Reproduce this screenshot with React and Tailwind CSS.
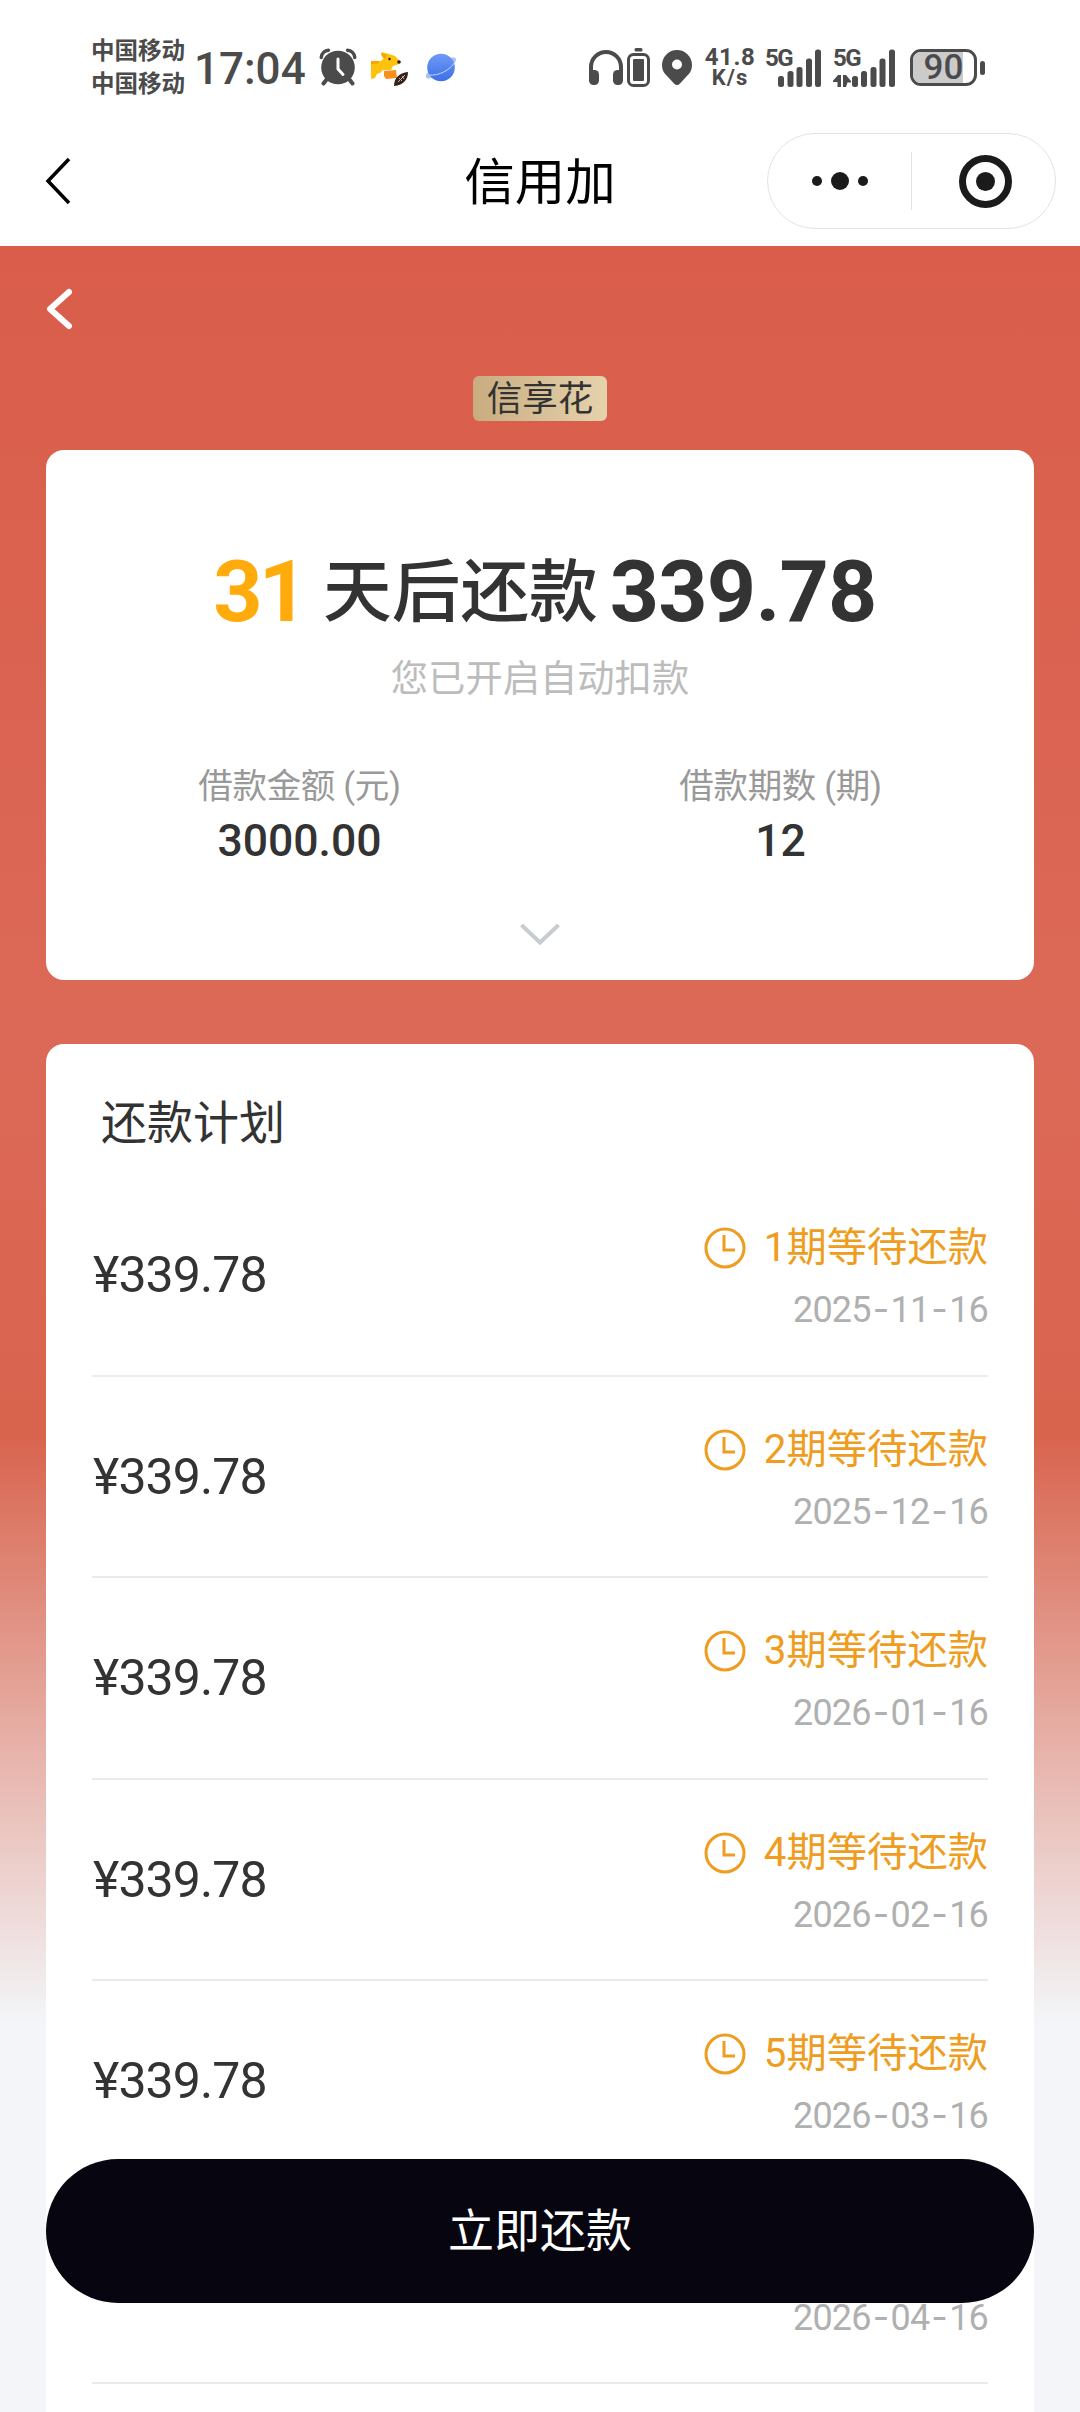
const plan = [
  { term: 1, amount: "339.78", date: "2025-11-16" },
  { term: 2, amount: "339.78", date: "2025-12-16" },
  { term: 3, amount: "339.78", date: "2026-01-16" },
  { term: 4, amount: "339.78", date: "2026-02-16" },
  { term: 5, amount: "339.78", date: "2026-03-16" },
  { term: 6, amount: "339.78", date: "2026-04-16" },
];

function AlarmIcon() {
  return (
    <svg width="38" height="38" viewBox="0 0 38 38" fill="none">
      <circle cx="19" cy="19.5" r="16.8" fill="#4b4b4b" />
      <path d="M2.200 9.500A8 8 0 0 1 9.500 2.200M35.800 9.500A8 8 0 0 0 28.500 2.200" stroke="#4b4b4b" strokeWidth="3.4" strokeLinecap="round" />
      <path d="M8 31l-3.500 4.500M30 31l3.500 4.500" stroke="#4b4b4b" strokeWidth="4" strokeLinecap="round" />
      <path d="M19 11v10l5 5.500" stroke="#fff" strokeWidth="3" strokeLinecap="round" strokeLinejoin="round" />
    </svg>
  );
}

function DogIcon() {
  return (
    <svg width="40" height="36" viewBox="0 0 40 36">
      <path d="M1 10h10l3-3-3-3 1-3 7 2 6 2 5 5-1 3-6 2-2 4h-8l-3 3-3 1-2 4-4 1z" fill="#fdc10f" />
      <path d="M1 10h9l-3 3H1zM11 2l6 2-2 4-2-1z" fill="#f5a800" />
      <path d="M14 20l12-1 1 8-11 1-2-3z" fill="#f98f1c" />
      <circle cx="19.500" cy="8" r="1.200" fill="#2c1b12" />
      <circle cx="29" cy="11" r="1.800" fill="#2c1b12" />
      <path d="M24 35c0-8 5-13 14-14 0 7-4 13-14 14z" fill="#33211c" />
      <path d="M28 31l7-7M29 27l3 3M32 25l2 3" stroke="#d8b7a0" strokeWidth="1" />
    </svg>
  );
}

function PlanetIcon() {
  return (
    <svg width="32" height="32" viewBox="0 0 32 32" fill="none">
      <defs>
        <linearGradient id="planet" x1="0" y1="0" x2="0" y2="1">
          <stop stopColor="#6f9bf5" />
          <stop offset="1" stopColor="#3f6fe8" />
        </linearGradient>
      </defs>
      <path d="M24 7c6-3 8-1 6.500 2.500S25 17 16 21.500 1 28.500 1 24.500 3 21 6 19z" fill="#a9c2fa" />
      <circle cx="16" cy="15.500" r="13.800" fill="url(#planet)" />
      <path d="M4 23c10 1 21-5 25.500-12.500" stroke="#c4d6ff" strokeWidth="1" />
    </svg>
  );
}

function HeadphonesIcon() {
  return (
    <svg width="36" height="38" viewBox="0 0 36 38" fill="none">
      <path d="M3 28V18a15 15 0 0 1 30 0v10" stroke="#4b4b4b" strokeWidth="4" />
      <rect x="1" y="21" width="10" height="15" rx="4.500" fill="#4b4b4b" />
      <rect x="25" y="21" width="10" height="15" rx="4.500" fill="#4b4b4b" />
    </svg>
  );
}

function DeviceBatteryIcon() {
  return (
    <svg width="23" height="40" viewBox="0 0 23 40" fill="none">
      <rect x="7.500" y="0" width="8" height="3.500" rx="1.500" fill="#4b4b4b" />
      <rect x="1.500" y="6.500" width="20" height="31" rx="5" stroke="#4b4b4b" strokeWidth="3" />
      <rect x="6" y="11" width="11" height="22" rx="1" fill="#4b4b4b" />
    </svg>
  );
}

function PinIcon() {
  return (
    <svg width="30" height="36" viewBox="0 0 30 36">
      <path
        fillRule="evenodd"
        d="M15 0a15 15 0 0 1 15 15c0 6-3 9-6 12l-6 6.500q-3 3-6 0L6 27c-3-3-6-6-6-12A15 15 0 0 1 15 0zm0 9.500a5 5 0 1 0 0 10 5 5 0 0 0 0-10z"
        fill="#4b4b4b"
      />
    </svg>
  );
}

function Signal({ data }) {
  return (
    <div className="relative h-[38px] w-[62px]">
      <span className="absolute -top-px left-0 text-[24px] leading-[20px] font-bold tracking-[-1.5px]">5G</span>
      <svg className="absolute inset-0" width="62" height="38" viewBox="0 0 62 38" fill="#4b4b4b">
        <rect x={data ? 19 : 13} y="27" width="6" height="11" rx="2.500" />
        <rect x={data ? 28 : 22.5} y="22" width="6" height="16" rx="2.500" />
        <rect x={data ? 37.5 : 31.5} y="18" width="6" height="20" rx="2.500" />
        <rect x={data ? 46.5 : 41} y="9.500" width="6" height="28.500" rx="2.500" />
        <rect x={data ? 56 : 50} y="0.500" width="6" height="37.500" rx="2.500" />
        {data && <path d="M-1 33l6-7h3v12H4.500v-5zM10 26h3l5 6v1.500h-3.500L13 38h-3z" />}
      </svg>
    </div>
  );
}

function StatusBar() {
  return (
    <div className="flex h-[120px] items-start pt-[48px] pr-[95px] pl-[91px] text-[#4b4b4b]">
      <div className="-mt-[13px] w-[103px] text-[23.500px] leading-[33px] font-bold">
        <div>中国移动</div>
        <div>中国移动</div>
      </div>
      <div className="w-[125px] text-[44px] leading-[42px] font-medium">17:04</div>
      <AlarmIcon />
      <div className="ml-[13px] pt-[3px]">
        <DogIcon />
      </div>
      <div className="ml-[15px] pt-[4px]">
        <PlanetIcon />
      </div>
      <div className="ml-auto flex items-start">
        <div className="pt-px">
          <HeadphonesIcon />
        </div>
        <div className="ml-[3px]">
          <DeviceBatteryIcon />
        </div>
        <div className="ml-[12px] pt-[2px]">
          <PinIcon />
        </div>
        <div className="-mt-px ml-[11px] w-[54px] text-center text-[24px] leading-[20px] font-bold tracking-[0.6px]">
          <div>41.8</div>
          <div className="text-[22px] leading-[22px] tracking-[1px]">K/s</div>
        </div>
        <div className="ml-[8px] flex gap-[6px] pt-px">
          <Signal />
          <Signal data />
        </div>
        <div className="ml-[15px] flex items-center gap-[3px] pt-px">
          <div className="relative h-[37px] w-[67px] rounded-[11px] border-[3px] border-[#4b4b4b]">
            <div className="h-full w-[50px] rounded-l-[8px] bg-[#cbcbcb]" />
            <span className="absolute inset-0 text-center text-[35px] leading-[32px] font-medium">90</span>
          </div>
          <div className="h-[14px] w-[5px] rounded-full bg-[#4b4b4b]" />
        </div>
      </div>
    </div>
  );
}

function TitleBar() {
  return (
    <div className="grid h-[126px] grid-cols-3 items-center pb-[4px]">
      <svg className="ml-[43px]" width="30" height="50" viewBox="0 0 30 50" fill="none">
        <path d="M26 3L5 25l21 22" stroke="#000" strokeWidth="3.500" />
      </svg>
      <h1 className="pt-[4px] text-center text-[50.500px] leading-[60px] text-black">信用加</h1>
      <div className="mr-[24px] flex h-[96px] w-[289px] items-center justify-self-end rounded-full border border-[#e3e3e3]">
        <div className="flex h-[58px] w-[144px] items-center justify-center gap-[9px] border-r border-[#e3e3e3]">
          <i className="h-[10px] w-[10px] rounded-full bg-[#1b1b1b]" />
          <i className="h-[18px] w-[18px] rounded-full bg-[#1b1b1b]" />
          <i className="h-[10px] w-[10px] rounded-full bg-[#1b1b1b]" />
        </div>
        <div className="flex flex-1 justify-center pl-[4px]">
          <div className="grid h-[53px] w-[53px] place-items-center rounded-full border-[7px] border-[#1b1b1b]">
            <i className="h-[19px] w-[19px] rounded-full bg-[#1b1b1b]" />
          </div>
        </div>
      </div>
    </div>
  );
}

function Summary() {
  return (
    <section className="mt-[29px] flex h-[530px] flex-col items-center rounded-[18px] bg-white pt-[97px] text-[#333]">
      <div className="flex items-center pl-[10px] leading-[88px]">
        <span className="text-[86px] font-bold tracking-[-4px] text-[#ffab0b]">31</span>
        <span className="ml-[19px] pt-[2px] text-[68.700px] font-medium">天后还款</span>
        <span className="ml-[12px] text-[86px] font-bold tracking-[-0.8px]">339.78</span>
      </div>
      <p className="mt-[17px] text-[37.300px] leading-[50px] text-[#bcbcbc]">您已开启自动扣款</p>
      <div className="mt-[58px] grid w-[962px] grid-cols-2 text-center">
        <div>
          <div className="text-[34.500px] leading-[48px] tracking-[-0.3px] text-[#999]">借款金额 (元)</div>
          <div className="mt-[4px] text-[44.500px] leading-[54px] font-medium">3000.00</div>
        </div>
        <div>
          <div className="text-[34.500px] leading-[48px] tracking-[-0.3px] text-[#999]">借款期数 (期)</div>
          <div className="mt-[4px] text-[44.500px] leading-[54px] font-medium">12</div>
        </div>
      </div>
      <svg className="mt-[54px]" width="42" height="26" viewBox="0 0 42 26" fill="none">
        <path d="M2.500 3L21 20.500 39.500 3" stroke="#c7ccd0" strokeWidth="4" />
      </svg>
    </section>
  );
}

function ClockIcon() {
  return (
    <svg width="42" height="42" viewBox="0 0 42 42" fill="none" stroke="#ee9d21" strokeWidth="3">
      <circle cx="21" cy="21" r="19" />
      <path d="M20 8v15h11" />
    </svg>
  );
}

// hyphens are set in a wider face than the digits
function PlanDate({ value }) {
  return (
    <div className="text-[36px] leading-[44px] tracking-[-0.8px] text-[#b0b0b0]">
      {value.split("-").map((part, i) => (
        <span key={i}>
          {i > 0 && <span className="mx-[2px] font-[Inter]">-</span>}
          {part}
        </span>
      ))}
    </div>
  );
}

function PlanRow({ item }) {
  return (
    <li className="flex h-[201.500px] items-center justify-between border-b-2 border-[#ebebeb]">
      <span className="pt-[2px] pl-px text-[50px] tracking-[-0.9px] text-[#333]">¥{item.amount}</span>
      <div className="flex flex-col items-end pt-[7px]">
        <div className="mb-[15px] flex items-center text-[#ee9d21]">
          <ClockIcon />
          <span className="ml-[18px] text-[40.300px] leading-[48px]">{item.term}期等待还款</span>
        </div>
        <PlanDate value={item.date} />
      </div>
    </li>
  );
}

function App() {
  return (
    <div className="relative h-[2412px] w-[1080px] overflow-hidden bg-[#f3f5f8] font-['Roboto','Noto_Sans_CJK_SC',sans-serif]">
      <header className="bg-white">
        <StatusBar />
        <TitleBar />
      </header>
      <main className="bg-[linear-gradient(180deg,#d95d4a_0px,#dc6957_800px,#d9644e_1190px,#f3f5f8_1775px)] px-[46px] pt-[40px]">
        <svg className="-ml-[3px]" width="32" height="46" viewBox="0 0 32 46" fill="none">
          <path d="M26 6L7 23l19 17" stroke="#fff" strokeWidth="6" strokeLinecap="round" strokeLinejoin="round" />
        </svg>
        <div className="mx-auto mt-[44px] h-[45px] w-[134px] rounded-[6px] bg-linear-to-r from-[#c9ac80] to-[#e5d3ac] text-center text-[35.500px] leading-[46px] text-[#333]">
          信享花
        </div>
        <Summary />
        <section className="mt-[64px] h-[1500px] rounded-[18px] bg-white px-[46px] pt-[44px]">
          <h2 className="ml-[9px] h-[87px] text-[46px] leading-[70px] text-[#333]">还款计划</h2>
          <ul>
            {plan.map((item) => (
              <PlanRow key={item.term} item={item} />
            ))}
          </ul>
        </section>
      </main>
      <button className="absolute bottom-[109px] left-[46px] h-[144px] w-[988px] rounded-full bg-[#070610] text-[46px] text-white">
        立即还款
      </button>
    </div>
  );
}

export default App;
